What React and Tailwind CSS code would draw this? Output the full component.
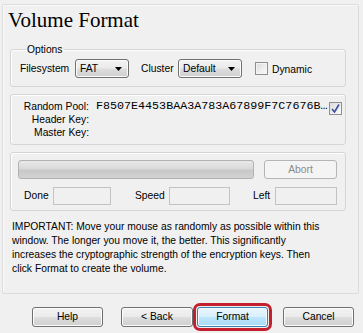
import React from "react"

const btn =
  "h-[20px] rounded-[3px] border border-[#707070] bg-[linear-gradient(#f2f2f2_0%,#ebebeb_48%,#dddddd_52%,#cfcfcf_100%)] text-black flex items-center justify-center shadow-[inset_0_0_0_1px_#fcfcfc]"

const Select = ({ value, width }) => (
  <div
    className={`${width} h-[19px] rounded-[3px] border border-[#707070] bg-[linear-gradient(#f2f2f2_0%,#ebebeb_48%,#dddddd_52%,#cfcfcf_100%)] shadow-[inset_0_0_0_1px_#fcfcfc] flex items-center justify-between pl-[4px] pr-[6px]`}
  >
    <span>{value}</span>
    <svg width="7" height="4" viewBox="0 0 7 4">
      <path d="M0 0h7L3.5 4z" fill="#000" />
    </svg>
  </div>
)

const Field = ({ width }) => (
  <div className={`${width} h-[18px] border border-[#c3c3c3] bg-[#f0f0f0]`} />
)

export default function App() {
  return (
    <div className="w-[363px] h-[333px] bg-[#f0f0f0] overflow-hidden text-[10.3px] text-black [font-family:'Liberation_Sans',Arial,sans-serif] pt-[4px]">
      <div className="ml-[2px] w-[357px] h-[290px] border border-[#dcdcdc] rounded-[2px] shadow-[inset_1px_1px_0_#fafafa]">
        <h1 className="pl-[5px] pt-[5px] h-[25px] leading-[20px] text-[21px] font-normal [font-family:'Liberation_Serif','Times_New_Roman',Tinos,'Noto_Serif','Nimbus_Roman','FreeSerif','DejaVu_Serif','Noto_Serif_CJK_SC',serif]">
          Volume Format
        </h1>

        <fieldset className="ml-[7px] mt-[13px] w-[336px] border border-[#d5d5d5] rounded-[3px] pl-[9px] pb-[8px] shadow-[inset_1px_1px_0_#fff]">
          <legend className="ml-[6px] px-[1px] leading-[13px]">Options</legend>
          <div className="mt-[3px] flex items-center">
            <span className="w-[55px]">Filesystem</span>
            <Select value="FAT" width="w-[54px]" />
            <span className="ml-[12px] w-[37px]">Cluster</span>
            <Select value="Default" width="w-[64px]" />
            <div className="ml-[13px] w-[13px] h-[13px] border border-[#8f8f8f] bg-[linear-gradient(135deg,#dcdcdc,#fbfbfb)] shadow-[inset_0_0_0_1px_#f4f4f4]" />
            <span className="ml-[4px] mt-[2px]">Dynamic</span>
          </div>
        </fieldset>

        <div className="ml-[7px] mt-[7px] w-[336px] h-[51px] border border-[#d5d5d5] rounded-[3px] shadow-[inset_1px_1px_0_#fff] pt-[5px] flex">
          <div className="w-[78px] text-right leading-[13px]">
            <div>Random Pool:</div>
            <div>Header Key:</div>
            <div>Master Key:</div>
          </div>
          <div className="ml-[7px] leading-[13px] [font-family:'Liberation_Mono','Courier_New',monospace] text-[11.7px]">
            F8507E4453BAA3A783A67899F7C7676B…
          </div>
          <div className="ml-[2px] mt-[2px] w-[13px] h-[13px] border border-[#8f8f8f] bg-[linear-gradient(135deg,#dcdcdc,#fbfbfb)] flex items-center justify-center">
            <svg width="9" height="9" viewBox="0 0 9 9">
              <path d="M1 5l2.5 3L8 0.5" fill="none" stroke="#3a4f9c" strokeWidth="1.6" />
            </svg>
          </div>
        </div>

        <div className="ml-[7px] mt-[7px] w-[336px] h-[59px] border border-[#d5d5d5] rounded-[3px] shadow-[inset_1px_1px_0_#fff] pt-[7px] pl-[7px]">
          <div className="flex">
            <div className="w-[236px] h-[19px] rounded-[3px] border border-[#b2b2b2] bg-[linear-gradient(#e8e8e8_0%,#dadada_45%,#c8c8c8_55%,#d2d2d2_100%)]" />
            <div className="ml-[10px] w-[73px] h-[19px] rounded-[3px] border border-[#b5b5b5] bg-[#f4f4f4] text-[#8b8b8b] flex items-center justify-center">
              Abort
            </div>
          </div>
          <div className="mt-[8px] flex items-center">
            <span className="ml-[6px] w-[29px]">Done</span>
            <Field width="w-[58px]" />
            <span className="ml-[24px] w-[34px]">Speed</span>
            <Field width="w-[61px]" />
            <span className="ml-[23px] w-[22px]">Left</span>
            <Field width="w-[62px]" />
          </div>
        </div>

        <p className="ml-[9px] mt-[9px] leading-[14px]">
          IMPORTANT: Move your mouse as randomly as possible within this
          <br />
          window. The longer you move it, the better. This significantly
          <br />
          increases the cryptographic strength of the encryption keys. Then
          <br />
          click Format to create the volume.
        </p>
      </div>

      <div className="mt-[13px] flex">
        <button className={`${btn} ml-[32px] w-[71px]`}>Help</button>
        <button className={`${btn} ml-[18px] w-[72px]`}>&lt; Back</button>
        <button className="ml-[4px] w-[71px] h-[20px] rounded-[3px] border border-[#3c7fb1] bg-[linear-gradient(#eaf6fd_0%,#d9f0fc_48%,#bee6fd_52%,#a7d9f5_100%)] shadow-[inset_0_0_0_1px_#f4fbff] flex items-center justify-center outline-[3px] outline-solid outline-[#c41f2d] outline-offset-[1px]">
          Format
        </button>
        <button className={`${btn} ml-[15px] w-[71px]`}>Cancel</button>
      </div>
    </div>
  )
}
